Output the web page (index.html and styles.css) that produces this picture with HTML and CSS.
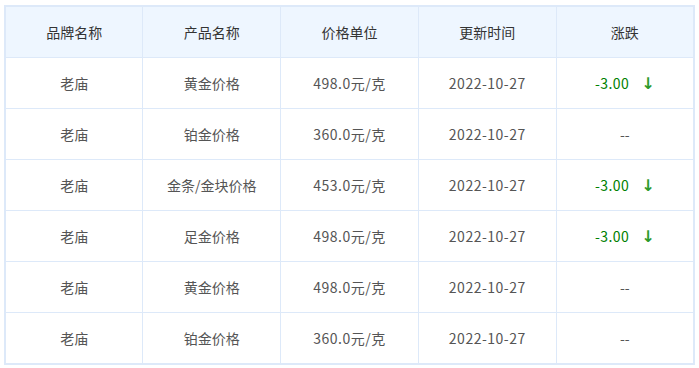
FILE: index.html
```html
<!DOCTYPE html>
<html lang="zh-CN">
<head>
<meta charset="utf-8">
<title>金价</title>
<link rel="stylesheet" href="styles.css">
</head>
<body>
<div class="wrap">
<table class="price">
<colgroup><col class="c"><col class="c"><col class="c"><col class="c"><col class="c"></colgroup>
<thead>
<tr><th>品牌名称</th><th>产品名称</th><th>价格单位</th><th>更新时间</th><th>涨跌</th></tr>
</thead>
<tbody>
<tr><td>老庙</td><td>黄金价格</td><td class="num">498.0元/克</td><td class="num">2022-10-27</td><td><span class="down">-3.00</span><span class="arrow">↓</span></td></tr>
<tr><td>老庙</td><td>铂金价格</td><td class="num">360.0元/克</td><td class="num">2022-10-27</td><td>--</td></tr>
<tr><td>老庙</td><td>金条/金块价格</td><td class="num">453.0元/克</td><td class="num">2022-10-27</td><td><span class="down">-3.00</span><span class="arrow">↓</span></td></tr>
<tr><td>老庙</td><td>足金价格</td><td class="num">498.0元/克</td><td class="num">2022-10-27</td><td><span class="down">-3.00</span><span class="arrow">↓</span></td></tr>
<tr><td>老庙</td><td>黄金价格</td><td class="num">498.0元/克</td><td class="num">2022-10-27</td><td>--</td></tr>
<tr><td>老庙</td><td>铂金价格</td><td class="num">360.0元/克</td><td class="num">2022-10-27</td><td>--</td></tr>
</tbody>
</table>
</div>
</body>
</html>
```
FILE: styles.css
```css
html, body {
  margin: 0;
  padding: 0;
  background: #ffffff;
}
.wrap {
  padding: 5px 0 0 4px;
}
.price {
  border-collapse: collapse;
  table-layout: fixed;
  width: 691px;
  border: 2px solid #dde9f9;
  font-family: "Microsoft YaHei", "Noto Sans CJK SC", sans-serif;
  font-size: 14px;
  color: #555555;
}
.price th, .price td {
  border: 1px solid #dde9f9;
  height: 50px;
  padding: 0;
  text-align: center;
  vertical-align: middle;
  font-weight: normal;
}
.price th {
  background: #eef6ff;
  color: #333333;
}
.price td.num {
  letter-spacing: 0.5px;
}
.down {
  color: #008000;
  letter-spacing: 0.4px;
}
.arrow {
  color: #2b9a2b;
  margin-left: 12px;
  font-family: "DejaVu Sans", sans-serif;
  font-size: 16px;
  font-weight: bold;
}
```
